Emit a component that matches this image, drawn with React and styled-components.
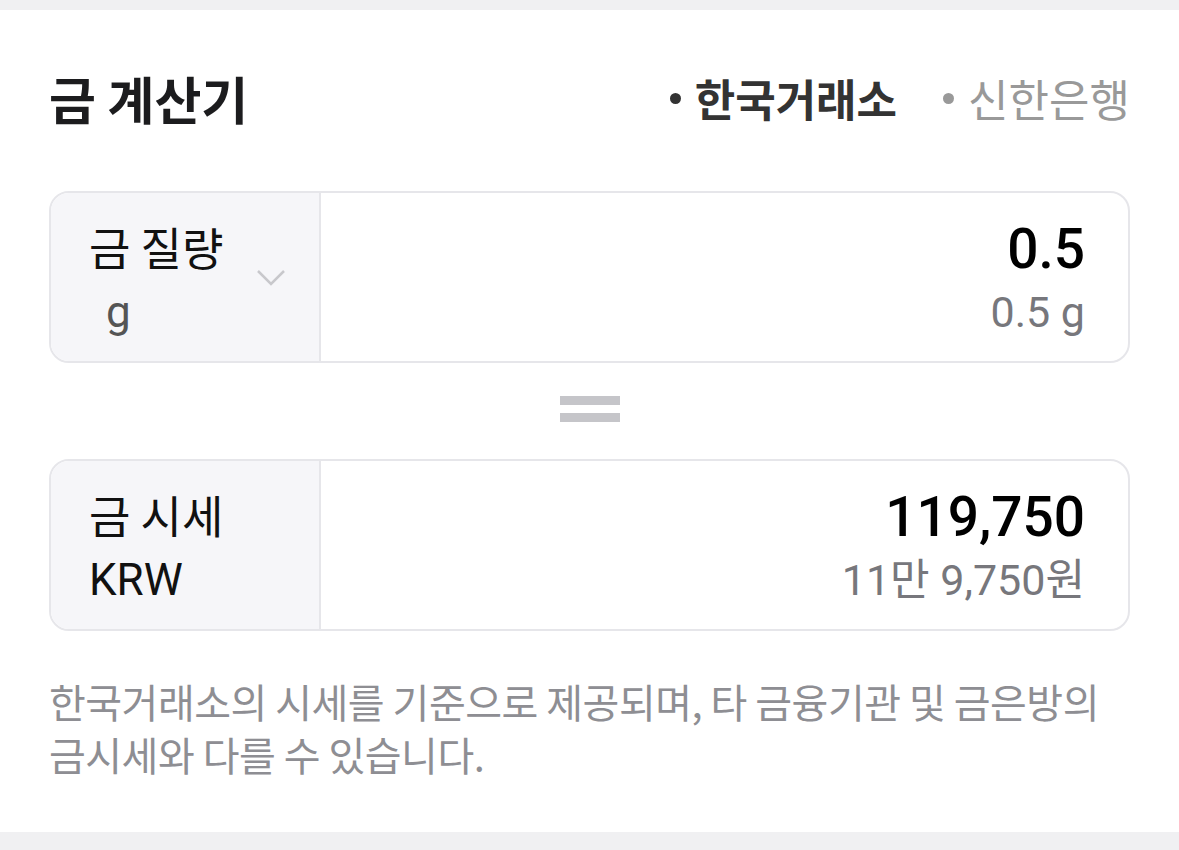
import React from 'react';
import styled, { createGlobalStyle } from 'styled-components';

const GlobalStyle = createGlobalStyle`
  html, body {
    margin: 0;
    padding: 0;
    background: #f0f0f2;
  }
  body {
    font-family: "Noto Sans CJK KR", "Noto Sans", sans-serif;
  }
`;

const latin = `Roboto, "Noto Sans CJK KR", sans-serif`;

// Styles
const Page = styled.div`
  padding: 10px 0 18px 0;
  background: #f0f0f2;
`;

const Panel = styled.div`
  background: #ffffff;
  padding: 58px 49px 0 49px;
  height: 822px;
  box-sizing: border-box;
`;

const HeaderRow = styled.div`
  display: flex;
  align-items: center;
  justify-content: space-between;
  margin-bottom: 63px;
`;

const Title = styled.h1`
  margin: 0;
  font-size: 51px;
  font-weight: 700;
  color: #1c1c1e;
  line-height: 60px;
`;

const Tabs = styled.div`
  display: flex;
  gap: 46px;
`;

const Tab = styled.span`
  display: flex;
  align-items: center;
  font-size: 44px;
  line-height: 60px;
  font-weight: ${(p) => (p.active ? 700 : 400)};
  color: ${(p) => (p.active ? '#333333' : '#999999')};

  &::before {
    content: '';
    width: 11px;
    height: 11px;
    border-radius: 50%;
    background: currentColor;
    margin-right: 14px;
  }
`;

const Box = styled.div`
  display: flex;
  height: 172px;
  border: 2px solid #e6e6ea;
  border-radius: 20px;
  overflow: hidden;
  box-sizing: border-box;
`;

const LabelCell = styled.div`
  position: relative;
  width: 270px;
  background: #f6f6f9;
  border-right: 2px solid #e6e6ea;
  padding: 23px 0 0 38px;
  box-sizing: border-box;
`;

const LabelMain = styled.div`
  font-size: 45px;
  line-height: 62px;
  color: #111111;
`;

const LabelSub = styled.div`
  font-family: ${latin};
  font-size: 44px;
  line-height: 62px;
  margin-top: 3px;
  color: ${(p) => (p.muted ? '#555555' : '#111111')};
  padding-left: ${(p) => (p.indent ? '17px' : '0')};
`;

const Chevron = styled.svg`
  position: absolute;
  right: 33px;
  top: 76px;
`;

const ValueCell = styled.div`
  flex: 1;
  display: flex;
  flex-direction: column;
  align-items: flex-end;
  padding: 24px 43px 0 0;
  font-family: ${latin};
`;

const ValueMain = styled.div`
  font-size: 55px;
  line-height: 64px;
  font-weight: 500;
  color: #000000;
`;

const ValueSub = styled.div`
  font-size: 43px;
  line-height: 62px;
  color: #77777c;
`;

const EqualsRow = styled.div`
  display: flex;
  justify-content: center;
  padding: 33px 0 37px 0;
`;

const EqualsSign = styled.div`
  display: flex;
  flex-direction: column;
  gap: 8px;
`;

const Bar = styled.div`
  width: 60px;
  height: 9px;
  background: #c5c5c9;
`;

const Note = styled.p`
  margin: 44px 0 0 0;
  font-size: 40px;
  line-height: 53px;
  letter-spacing: -0.5px;
  color: #8e8e93;
`;

const App = () => {
  return (
    <Page>
      <GlobalStyle />
      <Panel>
        <HeaderRow>
          <Title>금 계산기</Title>
          <Tabs>
            <Tab active>한국거래소</Tab>
            <Tab>신한은행</Tab>
          </Tabs>
        </HeaderRow>

        <Box>
          <LabelCell>
            <LabelMain>금 질량</LabelMain>
            <LabelSub muted indent>g</LabelSub>
            <Chevron width="30" height="18" viewBox="0 0 30 18">
              <path d="M2 2 L15 15 L28 2" fill="none" stroke="#c8c8cc" strokeWidth="2.5" />
            </Chevron>
          </LabelCell>
          <ValueCell>
            <ValueMain>0.5</ValueMain>
            <ValueSub>0.5 g</ValueSub>
          </ValueCell>
        </Box>

        <EqualsRow>
          <EqualsSign>
            <Bar />
            <Bar />
          </EqualsSign>
        </EqualsRow>

        <Box>
          <LabelCell>
            <LabelMain>금 시세</LabelMain>
            <LabelSub>KRW</LabelSub>
          </LabelCell>
          <ValueCell>
            <ValueMain>119,750</ValueMain>
            <ValueSub>11만 9,750원</ValueSub>
          </ValueCell>
        </Box>

        <Note>
          한국거래소의 시세를 기준으로 제공되며, 타 금융기관 및 금은방의
          <br />
          금시세와 다를 수 있습니다.
        </Note>
      </Panel>
    </Page>
  );
};

export default App;
